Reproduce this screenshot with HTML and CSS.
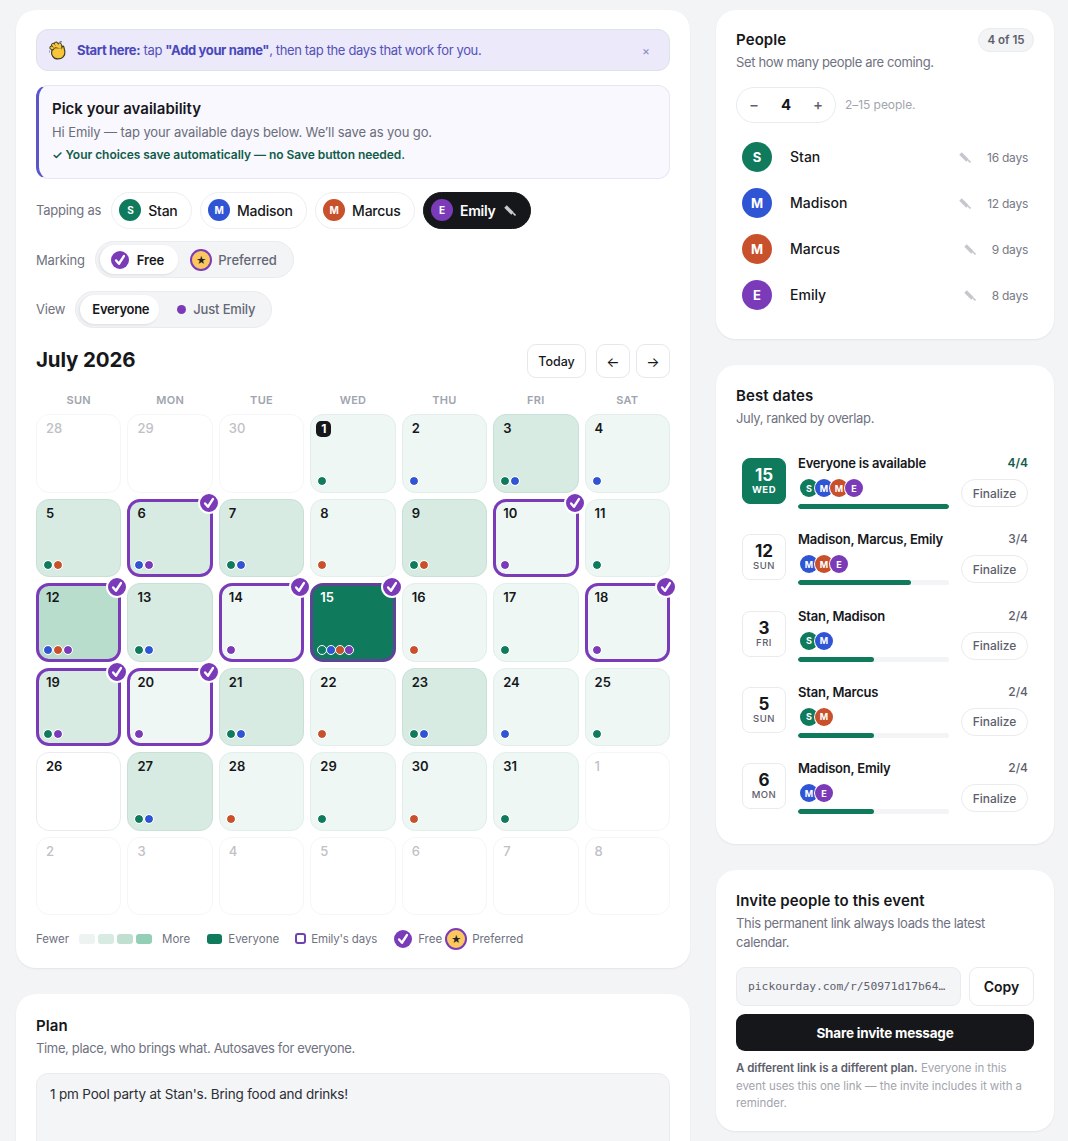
FILE: index.html
```html
<!DOCTYPE html>
<html lang="en">
<head>
    <title>July 2026 availability</title>
    <meta name="viewport" content="width=device-width, initial-scale=1.0">
    <link rel="stylesheet" href="styles.css">
</head>
<body>
<svg class="defs" width="0" height="0">
    <symbol id="pencil" viewBox="0 0 12 12"><path d="M1.5 2.5 L8.5 9.5" stroke="currentColor" stroke-width="3.6"/><path d="M9 9 L11.5 11.5" stroke="currentColor" stroke-width="1.6"/></symbol>
    <symbol id="tick" viewBox="0 0 12 12"><path d="M3.4 6.3 L5.3 8.5 L8.6 3.4" fill="none" stroke="#fff" stroke-width="1.6" stroke-linecap="round" stroke-linejoin="round"/></symbol>
</svg>
<div class="page">
    <main class="main-col">
        <section class="card cal-card">
            <div class="banner">
                <svg class="wave" viewBox="1 0 16 18" width="17" height="19">
                    <g fill="none" stroke-linecap="round">
                        <g stroke="#3b3a2a" stroke-width="4">
                            <path d="M9 10 L3.4 6.4 M9.6 9 L5 3.8 M11 8 L7.6 2.6 M12.6 8 L11 3.4"/>
                        </g>
                        <g stroke="#f8c53a" stroke-width="2.4">
                            <path d="M9 10 L3.4 6.4 M9.6 9 L5 3.8 M11 8 L7.6 2.6 M12.6 8 L11 3.4"/>
                        </g>
                    </g>
                    <path d="M3.6 9 C2.6 13 5 17 9.4 17 C13.6 17 16.4 14 16 10 L15 5.6 C14.6 4.4 13.4 4.8 13.2 6 L12.6 7.6 L7 6.6 Z" fill="#f8c53a" stroke="#3b3a2a" stroke-width="1.1"/>
                    <path d="M6 8.2 L13 8" stroke="#f8c53a" stroke-width="2.4"/>
                    <path d="M11 1 L13 0.6 M1 9 L0.8 11" stroke="#2c6f8e" stroke-width="1.1"/>
                </svg>
                <p class="banner-text"><b>Start here:</b> tap <b>"Add your name"</b>, then tap the days that work for you.</p>
                <span class="banner-close">×</span>
            </div>

            <div class="pick-box">
                <h3 class="pick-title">Pick your availability</h3>
                <p class="pick-sub">Hi Emily — tap your available days below. We’ll save as you go.</p>
                <p class="pick-note">✓ Your choices save automatically — no Save button needed.</p>
            </div>

            <div class="control-row row-tapping">
                <span class="control-label">Tapping as</span>
                <button class="person-pill"><span class="avatar av-24 stan">S</span>Stan</button>
                <button class="person-pill"><span class="avatar av-24 madison">M</span>Madison</button>
                <button class="person-pill"><span class="avatar av-24 marcus">M</span>Marcus</button>
                <button class="person-pill active"><span class="avatar av-24 emily">E</span>Emily<svg class="pencil-icon"><use href="#pencil"/></svg></button>
            </div>

            <div class="control-row">
                <span class="control-label">Marking</span>
                <div class="segment">
                    <button class="seg-btn on seg-free"><span class="mark-free"><svg><use href="#tick"/></svg></span>Free</button>
                    <button class="seg-btn seg-pref"><span class="mark-pref">★</span>Preferred</button>
                </div>
            </div>

            <div class="control-row">
                <span class="control-label">View</span>
                <div class="segment">
                    <button class="seg-btn on seg-all">Everyone</button>
                    <button class="seg-btn seg-just"><span class="just-dot"></span>Just Emily</button>
                </div>
            </div>

            <div class="cal-head">
                <h2 class="month">July 2026</h2>
                <div class="cal-nav">
                    <button class="nav-btn today">Today</button>
                    <button class="nav-btn arrow">←</button>
                    <button class="nav-btn arrow">→</button>
                </div>
            </div>

            <div class="weekdays">
                <span>SUN</span><span>MON</span><span>TUE</span><span>WED</span><span>THU</span><span>FRI</span><span>SAT</span>
            </div>

            <div class="grid">
                <div class="day out"><span class="num">28</span></div>
                <div class="day out"><span class="num">29</span></div>
                <div class="day out"><span class="num">30</span></div>
                <div class="day l1"><span class="num today-num">1</span><div class="dots"><i class="stan"></i></div></div>
                <div class="day l1"><span class="num">2</span><div class="dots"><i class="madison"></i></div></div>
                <div class="day l2"><span class="num">3</span><div class="dots"><i class="stan"></i><i class="madison"></i></div></div>
                <div class="day l1"><span class="num">4</span><div class="dots"><i class="madison"></i></div></div>

                <div class="day l2"><span class="num">5</span><div class="dots"><i class="stan"></i><i class="marcus"></i></div></div>
                <div class="day l2 mine"><span class="num">6</span><div class="dots"><i class="madison"></i><i class="emily"></i></div><span class="check"><svg><use href="#tick"/></svg></span></div>
                <div class="day l2"><span class="num">7</span><div class="dots"><i class="stan"></i><i class="madison"></i></div></div>
                <div class="day l1"><span class="num">8</span><div class="dots"><i class="marcus"></i></div></div>
                <div class="day l2"><span class="num">9</span><div class="dots"><i class="stan"></i><i class="marcus"></i></div></div>
                <div class="day l1 mine"><span class="num">10</span><div class="dots"><i class="emily"></i></div><span class="check"><svg><use href="#tick"/></svg></span></div>
                <div class="day l1"><span class="num">11</span><div class="dots"><i class="stan"></i></div></div>

                <div class="day l3 mine"><span class="num">12</span><div class="dots"><i class="madison"></i><i class="marcus"></i><i class="emily"></i></div><span class="check"><svg><use href="#tick"/></svg></span></div>
                <div class="day l2"><span class="num">13</span><div class="dots"><i class="stan"></i><i class="madison"></i></div></div>
                <div class="day l1 mine"><span class="num">14</span><div class="dots"><i class="emily"></i></div><span class="check"><svg><use href="#tick"/></svg></span></div>
                <div class="day all mine"><span class="num">15</span><div class="dots"><i class="stan"></i><i class="madison"></i><i class="marcus"></i><i class="emily"></i></div><span class="check"><svg><use href="#tick"/></svg></span></div>
                <div class="day l1"><span class="num">16</span><div class="dots"><i class="marcus"></i></div></div>
                <div class="day l1"><span class="num">17</span><div class="dots"><i class="stan"></i></div></div>
                <div class="day l1 mine"><span class="num">18</span><div class="dots"><i class="emily"></i></div><span class="check"><svg><use href="#tick"/></svg></span></div>

                <div class="day l2 mine"><span class="num">19</span><div class="dots"><i class="stan"></i><i class="emily"></i></div><span class="check"><svg><use href="#tick"/></svg></span></div>
                <div class="day l1 mine"><span class="num">20</span><div class="dots"><i class="emily"></i></div><span class="check"><svg><use href="#tick"/></svg></span></div>
                <div class="day l2"><span class="num">21</span><div class="dots"><i class="stan"></i><i class="madison"></i></div></div>
                <div class="day l1"><span class="num">22</span><div class="dots"><i class="marcus"></i></div></div>
                <div class="day l2"><span class="num">23</span><div class="dots"><i class="stan"></i><i class="madison"></i></div></div>
                <div class="day l1"><span class="num">24</span><div class="dots"><i class="madison"></i></div></div>
                <div class="day l1"><span class="num">25</span><div class="dots"><i class="stan"></i></div></div>

                <div class="day blank"><span class="num">26</span></div>
                <div class="day l2"><span class="num">27</span><div class="dots"><i class="stan"></i><i class="madison"></i></div></div>
                <div class="day l1"><span class="num">28</span><div class="dots"><i class="marcus"></i></div></div>
                <div class="day l1"><span class="num">29</span><div class="dots"><i class="stan"></i></div></div>
                <div class="day l1"><span class="num">30</span><div class="dots"><i class="marcus"></i></div></div>
                <div class="day l1"><span class="num">31</span><div class="dots"><i class="stan"></i></div></div>
                <div class="day out"><span class="num">1</span></div>

                <div class="day out"><span class="num">2</span></div>
                <div class="day out"><span class="num">3</span></div>
                <div class="day out"><span class="num">4</span></div>
                <div class="day out"><span class="num">5</span></div>
                <div class="day out"><span class="num">6</span></div>
                <div class="day out"><span class="num">7</span></div>
                <div class="day out"><span class="num">8</span></div>
            </div>

            <div class="legend">
                <span>Fewer</span>
                <div class="swatches"><i class="sw sw1"></i><i class="sw sw2"></i><i class="sw sw3"></i><i class="sw sw4"></i></div>
                <span class="legend-more">More</span>
                <i class="sw sw-all"></i><span class="legend-everyone">Everyone</span>
                <i class="sw-mine"></i><span class="legend-days">Emily's days</span>
                <span class="mark-free"><svg><use href="#tick"/></svg></span><span class="legend-free">Free</span>
                <span class="mark-pref">★</span><span>Preferred</span>
            </div>
        </section>

        <section class="card plan-card">
            <h3 class="card-title">Plan</h3>
            <p class="card-sub">Time, place, who brings what. Autosaves for everyone.</p>
            <div class="plan-text">1 pm Pool party at Stan's. Bring food and drinks!</div>
        </section>
    </main>

    <aside class="side-col">
        <section class="card people-card">
            <div class="title-row">
                <h3 class="card-title">People</h3>
                <span class="count-badge">4 of 15</span>
            </div>
            <p class="card-sub">Set how many people are coming.</p>
            <div class="stepper-row">
                <div class="stepper"><span class="step">−</span><b class="step-val">4</b><span class="step">+</span></div>
                <span class="stepper-hint">2–15 people.</span>
            </div>
            <ul class="people-list">
                <li class="person"><span class="avatar av-30 stan">S</span><span class="person-name">Stan</span><svg class="pencil-icon grey"><use href="#pencil"/></svg><span class="person-days">16 days</span></li>
                <li class="person"><span class="avatar av-30 madison">M</span><span class="person-name">Madison</span><svg class="pencil-icon grey"><use href="#pencil"/></svg><span class="person-days">12 days</span></li>
                <li class="person"><span class="avatar av-30 marcus">M</span><span class="person-name">Marcus</span><svg class="pencil-icon grey"><use href="#pencil"/></svg><span class="person-days">9 days</span></li>
                <li class="person"><span class="avatar av-30 emily">E</span><span class="person-name">Emily</span><svg class="pencil-icon grey"><use href="#pencil"/></svg><span class="person-days">8 days</span></li>
            </ul>
        </section>

        <section class="card best-card">
            <h3 class="card-title">Best dates</h3>
            <p class="card-sub">July, ranked by overlap.</p>
            <div class="best-list">
                <div class="best top">
                    <div class="tile"><b>15</b><span>WED</span></div>
                    <div class="best-main">
                        <div class="best-name">Everyone is available</div>
                        <div class="mini-avatars"><span class="avatar av-18 stan">S</span><span class="avatar av-18 madison">M</span><span class="avatar av-18 marcus">M</span><span class="avatar av-18 emily">E</span></div>
                        <div class="bar"><div class="bar-fill" style="width:100%"></div></div>
                    </div>
                    <div class="best-side"><span class="score">4/4</span><button class="finalize">Finalize</button></div>
                </div>
                <div class="best">
                    <div class="tile"><b>12</b><span>SUN</span></div>
                    <div class="best-main">
                        <div class="best-name">Madison, Marcus, Emily</div>
                        <div class="mini-avatars"><span class="avatar av-18 madison">M</span><span class="avatar av-18 marcus">M</span><span class="avatar av-18 emily">E</span></div>
                        <div class="bar"><div class="bar-fill" style="width:75%"></div></div>
                    </div>
                    <div class="best-side"><span class="score">3/4</span><button class="finalize">Finalize</button></div>
                </div>
                <div class="best">
                    <div class="tile"><b>3</b><span>FRI</span></div>
                    <div class="best-main">
                        <div class="best-name">Stan, Madison</div>
                        <div class="mini-avatars"><span class="avatar av-18 stan">S</span><span class="avatar av-18 madison">M</span></div>
                        <div class="bar"><div class="bar-fill" style="width:50%"></div></div>
                    </div>
                    <div class="best-side"><span class="score">2/4</span><button class="finalize">Finalize</button></div>
                </div>
                <div class="best">
                    <div class="tile"><b>5</b><span>SUN</span></div>
                    <div class="best-main">
                        <div class="best-name">Stan, Marcus</div>
                        <div class="mini-avatars"><span class="avatar av-18 stan">S</span><span class="avatar av-18 marcus">M</span></div>
                        <div class="bar"><div class="bar-fill" style="width:50%"></div></div>
                    </div>
                    <div class="best-side"><span class="score">2/4</span><button class="finalize">Finalize</button></div>
                </div>
                <div class="best">
                    <div class="tile"><b>6</b><span>MON</span></div>
                    <div class="best-main">
                        <div class="best-name">Madison, Emily</div>
                        <div class="mini-avatars"><span class="avatar av-18 madison">M</span><span class="avatar av-18 emily">E</span></div>
                        <div class="bar"><div class="bar-fill" style="width:50%"></div></div>
                    </div>
                    <div class="best-side"><span class="score">2/4</span><button class="finalize">Finalize</button></div>
                </div>
            </div>
        </section>

        <section class="card invite-card">
            <h3 class="card-title">Invite people to this event</h3>
            <p class="card-sub invite-sub">This permanent link always loads the latest calendar.</p>
            <div class="link-row">
                <div class="link-box">pickourday.com/r/50971d17b64…</div>
                <button class="copy-btn">Copy</button>
            </div>
            <button class="share-btn">Share invite message</button>
            <p class="invite-note"><b>A different link is a different plan.</b> Everyone in this event uses this one link — the invite includes it with a reminder.</p>
        </section>
    </aside>
</div>
</body>
</html>
```

FILE: styles.css
```css
* {
    box-sizing: border-box;
}

html, body {
    height: 100vh;
    overflow: hidden;
}

body {
    margin: 0;
    background: #f3f4f6;
    color: #16171b;
    font-family: Inter, "Noto Sans", sans-serif;
    font-size: 13px;
}

h2, h3, p, ul {
    margin: 0;
    padding: 0;
}

button {
    font-family: inherit;
    cursor: pointer;
}

.defs {
    position: absolute;
}

.page {
    display: grid;
    grid-template-columns: 674px 338px;
    column-gap: 26px;
    padding: 10px 14px 0 16px;
    align-items: start;
}

.main-col, .side-col {
    display: flex;
    flex-direction: column;
    gap: 26px;
}

.card {
    background: #fff;
    border-radius: 20px;
    box-shadow: 0 1px 2px rgba(20, 24, 40, 0.07);
}

.card-title {
    font-size: 15px;
    font-weight: 600;
    letter-spacing: 0.1px;
    line-height: 20px;
}

.card-sub {
    color: #6f7280;
    font-size: 13px;
    line-height: 19px;
    margin-top: 3px;
    letter-spacing: -0.35px;
}

/* avatars + person colours */
.avatar {
    display: inline-flex;
    align-items: center;
    justify-content: center;
    border-radius: 50%;
    color: #fff;
    font-weight: 700;
    flex: none;
}

.stan { background: #0f7a5c; }
.madison { background: #2f55d4; }
.marcus { background: #c8502b; }
.emily { background: #7b3bb9; }

.av-24 { width: 22px; height: 22px; font-size: 10px; }
.av-30 { width: 30px; height: 30px; font-size: 13px; }
.av-18 { width: 18px; height: 18px; font-size: 9px; }

/* left card */
.cal-card {
    height: 958px;
    padding: 19px 20px 0;
}

.banner {
    height: 42px;
    display: flex;
    align-items: center;
    padding: 0 19px 0 12px;
    background: #ebe9fa;
    border: 1px solid #d9e5e6;
    border-radius: 12px;
    color: #4f4cc0;
}

.wave {
    flex: none;
    margin-right: 11px;
}

.banner-text {
    flex: 1;
    font-size: 13px;
    letter-spacing: -0.36px;
    color: #5451b8;
}

.banner-text b {
    font-weight: 700;
    color: #4a47bb;
}

.banner-close {
    color: #8c8bc0;
    font-size: 12px;
}

.pick-box {
    height: 94px;
    margin-top: 14px;
    padding: 13px 13px 0;
    background: #f8f8fe;
    border: 1px solid #e6e7f4;
    border-left: 3px solid #5a56c9;
    border-radius: 12px;
}

.pick-title {
    font-size: 15px;
    font-weight: 600;
    line-height: 20px;
}

.pick-sub {
    margin-top: 3px;
    font-size: 13px;
    line-height: 20px;
    color: #6a6d7a;
    letter-spacing: -0.1px;
}

.pick-note {
    margin-top: 4px;
    font-size: 12px;
    line-height: 18px;
    font-weight: 600;
    color: #125c4a;
    letter-spacing: -0.04px;
}

.control-row {
    display: flex;
    align-items: center;
    margin-top: 11.5px;
    height: 38px;
}

.row-tapping {
    margin-top: 12px;
    gap: 8px;
}

.control-label {
    color: #6f7280;
    font-size: 13px;
    letter-spacing: -0.2px;
    margin-right: 10px;
}

.row-tapping .control-label {
    margin-right: 2px;
}

.person-pill {
    height: 37px;
    display: flex;
    align-items: center;
    gap: 7px;
    padding: 0 13.5px 0 7px;
    background: #fff;
    border: 1px solid #eceef1;
    border-radius: 19px;
    color: #16171b;
    font-size: 14px;
    font-weight: 500;
    letter-spacing: -0.25px;
}

.person-pill.active {
    background: #16171b;
    border-color: #16171b;
    color: #fff;
    font-weight: 600;
    padding-right: 14.5px;
}

.pencil-icon {
    width: 12px;
    height: 12px;
    color: #c9cbd0;
    margin-left: 1px;
}

.pencil-icon.grey {
    color: #c6c7cc;
    margin: 0 16px 0 0;
}

.segment {
    display: flex;
    align-items: center;
    height: 37px;
    padding: 3px 4px;
    background: #f3f4f6;
    border: 1px solid #e9ebee;
    border-radius: 19px;
}

.seg-btn {
    height: 29px;
    display: flex;
    align-items: center;
    border: 0;
    background: none;
    border-radius: 15px;
    font-size: 13px;
    font-weight: 500;
    color: #646775;
    padding: 0 12px;
}

.seg-btn.on {
    background: #fff;
    color: #16171b;
    box-shadow: -1px 1px 3px rgba(20, 24, 40, 0.1);
    font-weight: 600;
}

.seg-free {
    gap: 8px;
    padding: 0 14px 0 11px;
}

.seg-pref {
    gap: 6px;
    padding: 0 12px;
}

.seg-all {
    padding: 0 10px 0 12px;
    letter-spacing: -0.3px;
}

.seg-just {
    gap: 7px;
    padding: 0 12px 0 18px;
    letter-spacing: -0.15px;
}

.just-dot {
    width: 9px;
    height: 9px;
    border-radius: 50%;
    background: #7b3bb9;
}

.mark-free {
    width: 18px;
    height: 18px;
    border-radius: 50%;
    background: #7b3bb9;
    display: inline-flex;
    flex: none;
}

.mark-free svg {
    width: 18px;
    height: 18px;
}

.mark-pref {
    width: 22px;
    height: 22px;
    border-radius: 50%;
    background: #fbc75f;
    border: 2px solid #7b3bb9;
    display: inline-flex;
    align-items: center;
    justify-content: center;
    flex: none;
    font-size: 10px;
    color: #222;
}

.cal-head {
    display: flex;
    align-items: center;
    justify-content: space-between;
    margin-top: 16px;
    height: 34px;
}

.month {
    font-size: 20.5px;
    font-weight: 700;
    letter-spacing: -0.15px;
    margin-top: -3px;
}

.cal-nav {
    display: flex;
    gap: 6px;
}

.nav-btn {
    height: 34px;
    background: #fff;
    border: 1px solid #e6e8ec;
    border-radius: 9px;
    font-size: 12.5px;
    font-weight: 500;
    color: #16171b;
}

.today {
    width: 59px;
    padding: 0;
    margin-right: 4px;
}

.arrow {
    width: 34px;
    padding: 0;
    font-weight: 400;
    font-size: 14px;
}

.weekdays {
    display: grid;
    grid-template-columns: repeat(7, 1fr);
    column-gap: 6px;
    margin-top: 14px;
    padding-top: 1px;
    height: 22px;
    color: #a0a4ae;
    font-size: 11px;
    font-weight: 600;
    letter-spacing: 0.3px;
    text-align: center;
}

.grid {
    display: grid;
    grid-template-columns: repeat(7, 1fr);
    grid-auto-rows: 78.5px;
    gap: 6px;
}

.day {
    position: relative;
    border-radius: 13px;
    border: 1px solid #f1f2f4;
    background: #fff;
    padding: 5px 9px;
}

.num {
    font-size: 13px;
    font-weight: 600;
    line-height: 16px;
    color: #16171b;
    display: inline-block;
}

.day.out {
    border-color: #f6f6f8;
}

.day.out .num {
    color: #bfc1c6;
    font-weight: 500;
}

.day.blank {
    border-color: #e9ebee;
}

.l1 {
    background: #eef7f3;
    border-color: #e1eee9;
}

.l2 {
    background: #d7ebe2;
    border-color: #c8e0d6;
}

.l3 {
    background: #b9ddcd;
    border-color: #a9d3c1;
}

.all {
    background: #0f7a5c;
}

.all .num {
    color: #fff;
}

.mine {
    border: 3px solid #7b3bb9;
    padding: 3px 7px;
}

.all.mine {
    border-color: #5e4497;
}

.today-num {
    width: 15px;
    height: 16px;
    margin-left: -4px;
    border-radius: 5px;
    background: #16171b;
    color: #fff;
    font-size: 12px;
    font-weight: 700;
    text-align: center;
}

.dots {
    position: absolute;
    left: 6px;
    bottom: 6px;
    display: flex;
}

.mine .dots {
    left: 4px;
    bottom: 4px;
}

.dots i {
    width: 8px;
    height: 8px;
    border-radius: 50%;
    box-sizing: content-box;
    border: 1px solid #fff;
    background-clip: padding-box;
}

.all .dots i {
    border-width: 1.5px;
    margin-right: -1px;
}

.check {
    position: absolute;
    top: -10px;
    right: -10px;
    width: 22px;
    height: 22px;
    border-radius: 50%;
    background: #7b3bb9;
    border: 2px solid #fff;
    display: flex;
    align-items: center;
    justify-content: center;
}

.check svg {
    width: 18px;
    height: 18px;
}

.legend {
    display: flex;
    align-items: center;
    margin-top: 11.5px;
    height: 24px;
    color: #6f7280;
    font-size: 11.5px;
}

.swatches {
    display: flex;
    gap: 3px;
    margin: 0 10px;
}

.sw {
    width: 16px;
    height: 10px;
    border-radius: 3px;
}

.sw1 { background: #edf3f1; }
.sw2 { background: #d7ebe2; }
.sw3 { background: #bfe0d1; }
.sw4 { background: #93ceb6; }

.sw-all {
    width: 15px;
    background: #0f7a5c;
    margin: 0 6px 0 17px;
}

.sw-mine {
    width: 11px;
    height: 11px;
    border: 2px solid #6e43b0;
    border-radius: 3px;
    margin: 0 5px 0 16px;
}

.legend-days {
    letter-spacing: -0.15px;
}

.legend .mark-free {
    margin: 0 6px 0 17px;
}

.legend .mark-pref {
    margin: 0 5px 0 3px;
}

/* plan */
.plan-card {
    height: 200px;
    padding: 22px 20px;
}

.plan-text {
    margin-top: 15px;
    height: 140px;
    padding: 10px 13px;
    background: #f4f5f7;
    border: 1px solid #e9ebee;
    border-radius: 12px;
    font-size: 13.5px;
    line-height: 20px;
    color: #2b2d33;
    letter-spacing: -0.18px;
}

/* people */
.people-card {
    height: 329px;
    padding: 20px;
}

.title-row {
    display: flex;
    justify-content: space-between;
    align-items: center;
    height: 20px;
}

.count-badge {
    width: 56px;
    height: 24px;
    line-height: 22px;
    text-align: center;
    margin-top: -1px;
    background: #f3f4f6;
    border: 1px solid #e9ebee;
    border-radius: 12px;
    color: #5d606c;
    font-size: 11.5px;
    font-weight: 600;
}

.stepper-row {
    display: flex;
    align-items: center;
    gap: 9px;
    margin-top: 15px;
}

.stepper {
    width: 100px;
    height: 36px;
    display: flex;
    align-items: center;
    justify-content: space-between;
    padding: 0 12px 2px;
    border: 1px solid #e9ebee;
    border-radius: 18px;
}

.step {
    font-size: 15px;
    font-weight: 500;
    color: #5d606c;
}

.step-val {
    font-size: 15px;
    font-weight: 700;
}

.stepper-hint {
    color: #a3a5ae;
    font-size: 12px;
    padding-bottom: 2px;
    letter-spacing: -0.05px;
}

.people-list {
    list-style: none;
    margin-top: 11px;
}

.person {
    height: 46px;
    display: flex;
    align-items: center;
    padding: 0 6px;
}

.person-name {
    flex: 1;
    margin-left: 18px;
    font-size: 14px;
    font-weight: 500;
    padding-bottom: 1px;
}

.person-days {
    color: #777a86;
    font-size: 12px;
    letter-spacing: -0.25px;
}

/* best dates */
.best-card {
    height: 479px;
    padding: 21px 20px;
}

.best-list {
    margin-top: 26px;
}

.best {
    height: 76.25px;
    display: flex;
    padding: 0 6px;
}

.tile {
    width: 44px;
    height: 46px;
    flex: none;
    margin: 4px 12px 0 0;
    border: 1px solid #e9ebee;
    border-radius: 8px;
    display: flex;
    flex-direction: column;
    align-items: center;
    justify-content: center;
    color: #16171b;
}

.tile b {
    font-size: 17px;
    font-weight: 700;
    line-height: 18px;
}

.tile span {
    font-size: 9.5px;
    font-weight: 500;
    letter-spacing: 0.5px;
    line-height: 12px;
    color: #5d606c;
}

.top .tile {
    background: #0f7a5c;
    border-color: #0f7a5c;
    color: #fff;
}

.top .tile span {
    color: #fff;
    font-weight: 700;
}

.best-main {
    width: 151px;
    flex: none;
}

.best-name {
    font-size: 13px;
    font-weight: 600;
    line-height: 18px;
    white-space: nowrap;
    letter-spacing: -0.2px;
}

.mini-avatars {
    display: flex;
    margin: 7px 0 0 2px;
    height: 18px;
}

.mini-avatars .avatar + .avatar {
    margin-left: -3px;
    box-shadow: 0 0 0 1px #fff;
}

.bar {
    margin-top: 7px;
    height: 5px;
    border-radius: 3px;
    background: #f3f4f6;
    overflow: hidden;
}

.bar-fill {
    height: 5px;
    background: #0f7a5c;
    border-radius: 3px;
}

.best-side {
    flex: 1;
    display: flex;
    flex-direction: column;
    align-items: flex-end;
    padding-top: 1px;
}

.score {
    font-size: 12px;
    font-weight: 500;
    line-height: 16px;
    color: #5d606c;
}

.top .score {
    color: #125c4a;
    font-weight: 600;
}

.finalize {
    width: 67px;
    height: 28px;
    margin-top: 8px;
    background: #fff;
    border: 1px solid #e9ebee;
    border-radius: 14px;
    color: #5d606c;
    font-size: 12px;
    font-weight: 500;
    padding: 0;
}

/* invite */
.invite-card {
    height: 261px;
    padding: 21px 20px;
}

.invite-sub {
    line-height: 19px;
}

.link-row {
    display: flex;
    gap: 8px;
    margin-top: 15px;
}

.link-box {
    flex: 1;
    height: 39px;
    line-height: 37px;
    padding-left: 11px;
    background: #f4f5f7;
    border: 1px solid #e9ebee;
    border-radius: 9px;
    font-family: "DejaVu Sans Mono", monospace;
    font-size: 11.3px;
    color: #5d606c;
    white-space: nowrap;
}

.copy-btn {
    width: 65px;
    height: 39px;
    background: #fff;
    border: 1px solid #e9ebee;
    border-radius: 9px;
    font-size: 14px;
    font-weight: 600;
    color: #16171b;
}

.share-btn {
    display: block;
    width: 100%;
    height: 37px;
    margin-top: 8px;
    background: #16171b;
    border: 0;
    border-radius: 9px;
    color: #fff;
    font-size: 13.5px;
    font-weight: 700;
    letter-spacing: -0.2px;
}

.invite-note {
    margin-top: 9px;
    color: #a3a5ae;
    font-size: 11.5px;
    line-height: 17.5px;
    letter-spacing: -0.05px;
}

.invite-note b {
    color: #5d606c;
    font-weight: 600;
}
```
